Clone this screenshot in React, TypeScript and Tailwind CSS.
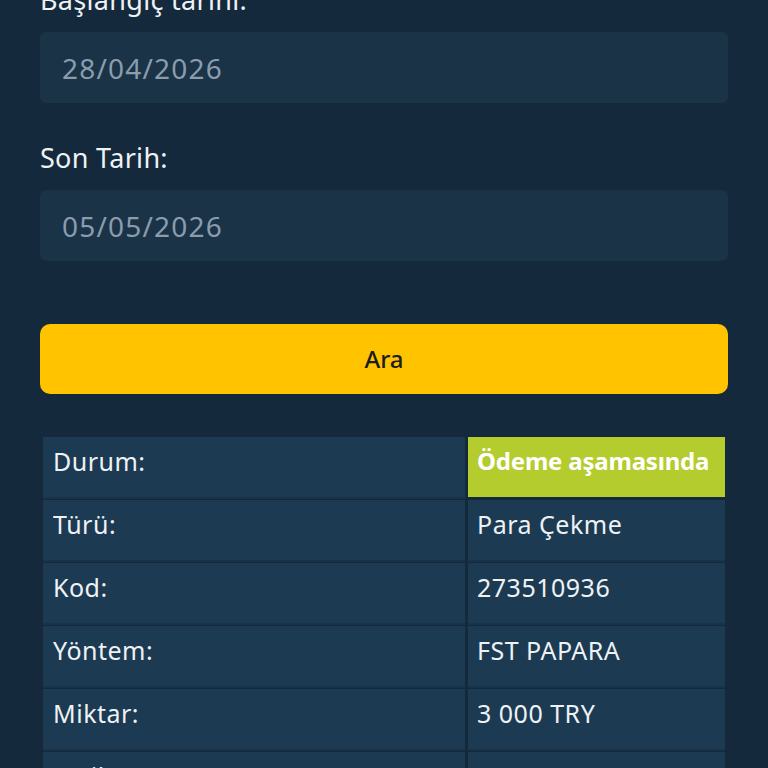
import React from "react";

const rows: { label: string; value: string; status?: boolean }[] = [
  { label: "Durum:", value: "Ödeme aşamasında", status: true },
  { label: "Türü:", value: "Para Çekme" },
  { label: "Kod:", value: "273510936" },
  { label: "Yöntem:", value: "FST PAPARA" },
  { label: "Miktar:", value: "3 000 TRY" },
  { label: "Tarih:", value: "05.05.2026 14:32" },
];

export default function App() {
  return (
    <div
      className="min-h-screen overflow-hidden bg-[#15293c]"
      style={{ fontFamily: '"Noto Sans", "Open Sans", sans-serif' }}
    >
      <div className="mt-[-16px] px-[40px] pb-10">
        <div className="flex flex-col">
          <label className="text-[27px] leading-[32px] tracking-[0.3px] text-[#eef2f5]">Başlangıç tarihi:</label>
          <div className="mt-[16px] flex h-[71px] items-center rounded-[6px] bg-[#1a3347] px-[22px] text-[28px] tracking-[1.2px] text-[#8a9cae]">
            28/04/2026
          </div>
        </div>
        <div className="mt-[39px] flex flex-col">
          <label className="text-[27px] leading-[32px] tracking-[0.3px] text-[#eef2f5]">Son Tarih:</label>
          <div className="mt-[16px] flex h-[71px] items-center rounded-[6px] bg-[#1a3347] px-[22px] text-[28px] tracking-[1.2px] text-[#8a9cae]">
            05/05/2026
          </div>
        </div>
        <button className="mt-[63px] flex h-[70px] w-full items-center justify-center rounded-[10px] bg-[#ffc300] text-[24px] font-medium text-[#1c1c1c]">
          Ara
        </button>
        <table className="mt-[40px] w-full border-separate border-spacing-[3px]">
          <tbody>
            {rows.map((r) => (
              <tr key={r.label}>
                <td className="h-[60px] w-[422px] bg-[#1c3a52] px-[10px] pt-[8px] align-top text-[25px] leading-[32px] tracking-[0.5px] text-[#eef2f5] shadow-[0_2px_0_#183248]">
                  {r.label}
                </td>
                <td
                  className={
                    r.status
                      ? "h-[60px] bg-[#b4cc2e] px-[9px] pt-[8px] align-top text-[24px] font-bold leading-[32px] tracking-[-0.2px] text-white"
                      : "h-[60px] bg-[#1c3a52] px-[9px] pt-[8px] align-top text-[25px] leading-[32px] tracking-[0.5px] text-[#eef2f5] shadow-[0_2px_0_#183248]"
                  }
                >
                  {r.value}
                </td>
              </tr>
            ))}
          </tbody>
        </table>
      </div>
    </div>
  );
}
